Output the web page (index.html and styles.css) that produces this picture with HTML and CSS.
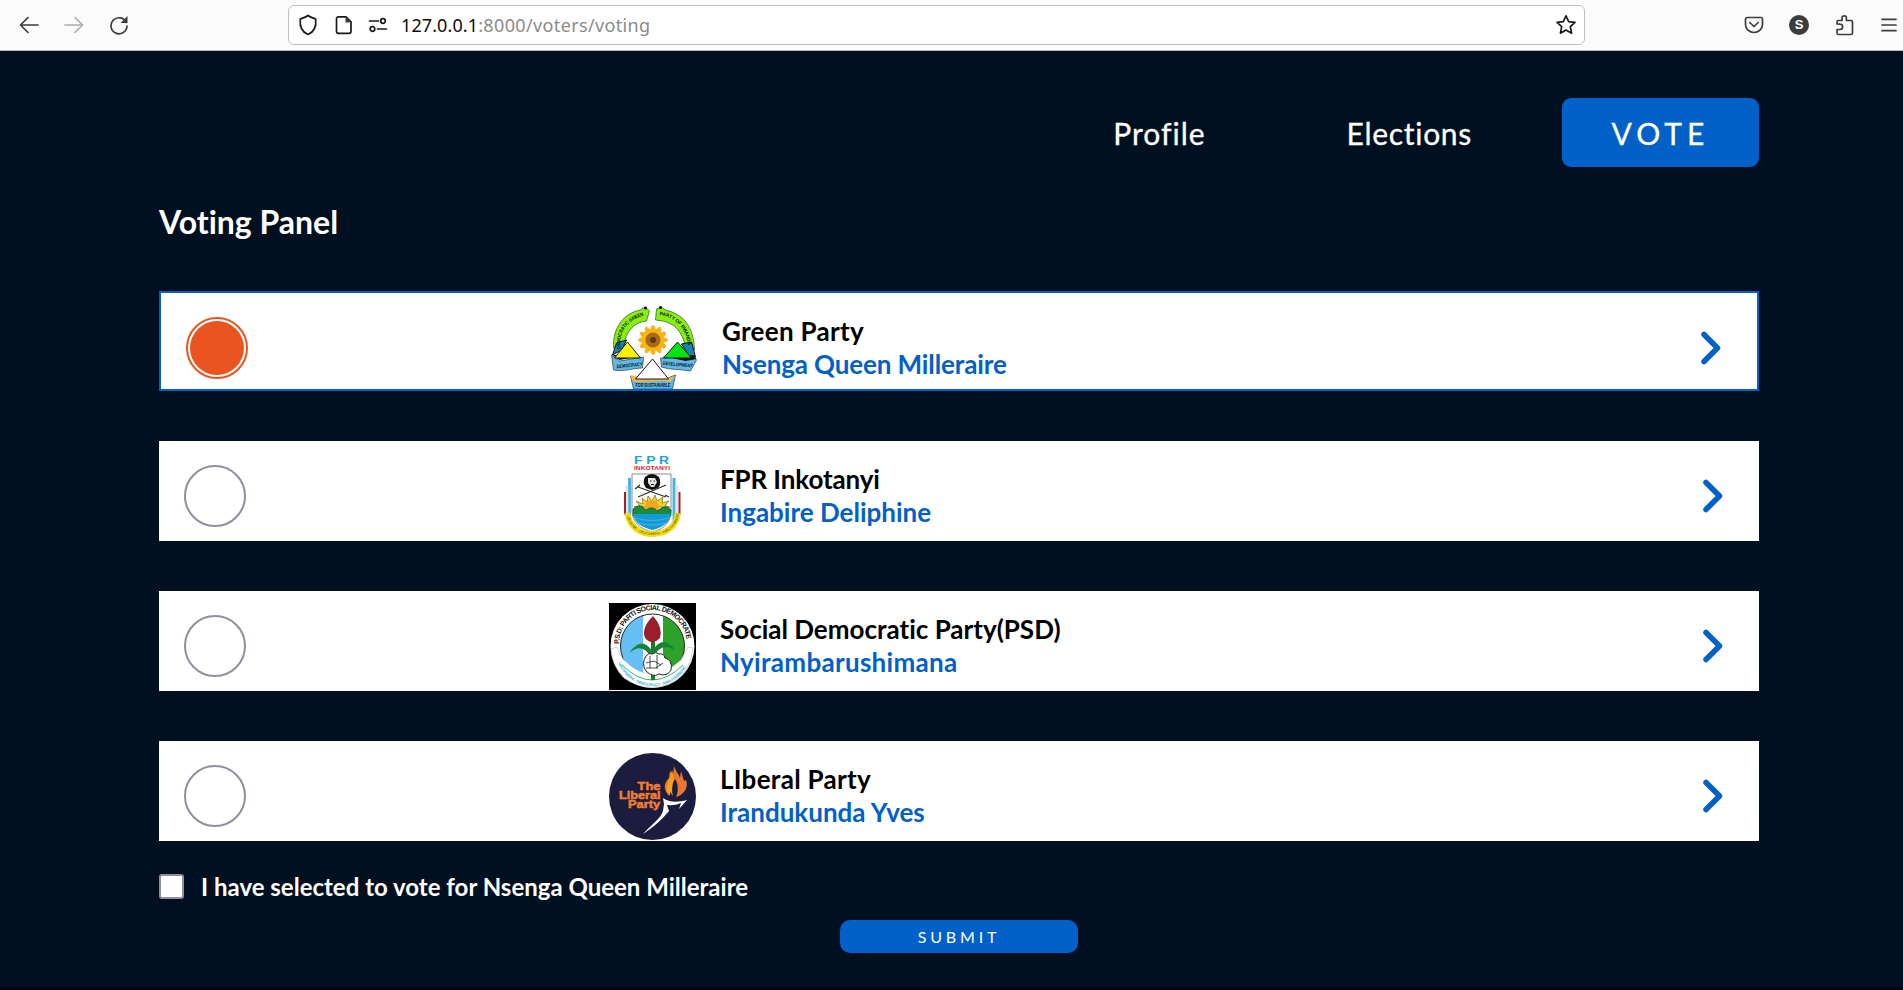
FILE: index.html
```html
<!DOCTYPE html>
<html lang="en">
<head>
<meta charset="utf-8">
<title>Voting Panel</title>
<link rel="stylesheet" href="styles.css">
</head>
<body>
<header class="browser">
  <div class="history">
    <svg width="20" height="20" viewBox="0 0 20 20"><path d="M19 10H2M9 2.500L1.500 10L9 17.500"/></svg>
    <svg class="off" width="20" height="20" viewBox="0 0 20 20"><path d="M1 10h17M11 2.500l7.500 7.500L11 17.500"/></svg>
    <svg width="20" height="20" viewBox="0 0 20 20"><path d="M17.300 7.500A8 8 0 1 0 18 11"/><path class="solid" d="M18.500 1v7h-7z"/></svg>
  </div>
  <div class="address">
    <svg class="shield" width="20" height="22" viewBox="0 0 20 22"><path d="M10 1.500C8 3.300 5 4 2.300 5C1.500 12 4 18 10 20.500C16 18 18.500 12 17.700 5C15 4 12 3.300 10 1.500z"/></svg>
    <svg class="page" width="18" height="20" viewBox="0 0 18 20"><path d="M3.500 1.800h7.500l5 5v9.500a2 2 0 0 1-2 2H3.500a2 2 0 0 1-2-2V3.800a2 2 0 0 1 2-2z"/><path class="solid" d="M10.500 1.500v6h6z"/></svg>
    <svg class="perms" width="20" height="16" viewBox="0 0 20 16"><path d="M1.500 4h9M9.500 12h9"/><circle cx="15" cy="4" r="2.300"/><circle cx="4.500" cy="12" r="2.300"/></svg>
    <span class="url"><b>127.0.0.1</b>:8000/voters/voting</span>
    <svg class="star" width="22" height="22" viewBox="0 0 22 22"><path d="M11 1.800l2.700 5.800 6.300.7-4.700 4.300 1.300 6.600L11 16l-5.600 3.200 1.300-6.600L2 8.300l6.300-.7z"/></svg>
  </div>
  <div class="tools">
    <svg width="20" height="20" viewBox="0 0 20 20"><path d="M3.200 2.500h13.600a1.700 1.700 0 0 1 1.700 1.700V9.500a8.500 8 0 0 1-17 0V4.200a1.700 1.700 0 0 1 1.700-1.700zM5.800 7.500L10 11.500l4.200-4"/></svg>
    <span class="account">S</span>
    <svg width="20" height="22" viewBox="0 0 20 22"><path d="M2 10V8a1.500 1.500 0 0 1 1.500-1.500h3.500V4a2.200 2.200 0 0 1 4.400 0v2.500h4.600A1.500 1.500 0 0 1 17.500 8v11a1.500 1.500 0 0 1-1.500 1.500H3.500A1.500 1.500 0 0 1 2 19v-3.500h3a2.500 2.500 0 0 0 0-5.300z"/></svg>
    <svg class="menu" width="16" height="16" viewBox="0 0 16 16"><path d="M1 2.300h14M1 8h14M1 13.700h14"/></svg>
  </div>
</header>
<main class="app">
  <nav class="nav">
    <a class="profile">Profile</a>
    <a class="elections">Elections</a>
    <a class="vote">VOTE</a>
  </nav>
  <h1 class="title">Voting Panel</h1>
  <form class="ballot">
    <label class="card selected">
      <span class="radio"></span>
      <svg class="logo" width="87" height="87" viewBox="1.500 -1 87 87">
        <defs>
          <path id="g1" d="M11 43C9 25 18 14 36 9"/>
          <path id="g2" d="M50 9C68 12 78 24 79 44"/>
        </defs>
        <g stroke="#183a18" stroke-width=".6" fill="#86f014">
          <path d="M36 1L40 5L37 15C25 16 16 25 14 41L4 42C3 22 14 7 31 4L33 2z"/>
          <path d="M47 3L52 1L56 4C73 8 84 19 85 44L76 41C73 26 65 17 53 15L46 14z"/>
        </g>
        <circle cx="36" cy="2" r="1.500"/><circle cx="51" cy="1.500" r="1.500"/>
        <g fill="#f8b415"><ellipse cx="43.500" cy="34" rx="15" ry="4"/><ellipse cx="43.500" cy="34" rx="15" ry="4" transform="rotate(30 43.500 34)"/><ellipse cx="43.500" cy="34" rx="15" ry="4" transform="rotate(60 43.500 34)"/><ellipse cx="43.500" cy="34" rx="15" ry="4" transform="rotate(90 43.500 34)"/><ellipse cx="43.500" cy="34" rx="15" ry="4" transform="rotate(120 43.500 34)"/><ellipse cx="43.500" cy="34" rx="15" ry="4" transform="rotate(150 43.500 34)"/></g>
        <circle cx="43.500" cy="34" r="7.500" fill="#a86a18"/><circle cx="43.500" cy="34" r="3" fill="#5a3810"/>
        <path d="M7 37L17 34L12 44L3 49zM72 38L82 36L86 51L80 50z" fill="#1785b8" stroke="#111"/>
        <path d="M2 49L10 55L34 51L33 62C24 62 14 66 4 64zM51 52L84 50L87 54L81 65C70 63 60 64 52 61z" fill="#5db9e8" stroke="#222" stroke-width=".6"/>
        <path d="M3 49L32 50L10 54zM53 50L84 49L87 53L76 55z" fill="#101410"/>
        <path d="M18 36L31 52H5z" fill="#fff200" stroke="#161616"/>
        <path d="M68 36L82 52H54z" fill="#00e511" stroke="#161616"/>
        <path d="M21 70L28 71L58 72L66 69L63 83H24z" fill="#5db9e8" stroke="#222" stroke-width=".6"/>
        <path d="M21 70C33 68 52 75 66 70L60 76C49 73 33 78 23 75z" fill="#f4b544"/>
        <path d="M43 53L59 73H26z" fill="#fff" stroke="#161616"/>
        <g font-family="Liberation Sans" font-weight="700" font-size="5" fill="#111">
          <text textLength="45" lengthAdjust="spacingAndGlyphs"><textPath href="#g1">DEMOCRATIC GREEN</textPath></text>
          <text textLength="45" lengthAdjust="spacingAndGlyphs"><textPath href="#g2">PARTY OF RWANDA</textPath></text>
          <text x="7" y="61" textLength="26" lengthAdjust="spacingAndGlyphs" transform="rotate(-6 20 60)" font-style="italic">DEMOCRACY</text>
          <text x="53" y="60" textLength="30" lengthAdjust="spacingAndGlyphs" transform="rotate(5 66 60)" font-style="italic">DEVELOPMENT</text>
          <text x="26" y="81" textLength="35" lengthAdjust="spacingAndGlyphs">FOR SUSTAINABLE</text>
        </g>
      </svg>
      <span class="who"><span class="party wide">Green Party</span><span class="name tight">Nsenga Queen Milleraire</span></span>
      <svg class="chev" width="20" height="34" viewBox="0 0 20 34"><path d="M3 3.500L16.500 17L3 30.500"/></svg>
    </label>
    <label class="card">
      <span class="radio"></span>
      <svg class="logo" width="87" height="87" viewBox="0 0 87 87">
        <g font-family="Liberation Sans" font-weight="700">
          <text x="25" y="10.500" font-size="10" fill="#1ea3dc" textLength="35" lengthAdjust="spacingAndGlyphs">F P R</text>
          <text x="25" y="17" font-size="5.500" fill="#e0242c" textLength="36" lengthAdjust="spacingAndGlyphs">INKOTANYI</text>
        </g>
        <path d="M20.500 25V68M65 25V68" stroke="#4bb5df" stroke-width="3"/>
        <path d="M18 32V64M68 32V64" stroke="#e4e4e4" stroke-width="2.500"/>
        <path d="M16 39V62M70.500 39V62" stroke="#a5202a" stroke-width="2"/>
        <path d="M23 21H62V57C62 72 52 77 43 79C32 76 23 70 23 57z" fill="#fff" stroke="#8a8a8a"/>
        <path d="M29 34L57 44M57 32L29 44M26 36l5-4M60 44l-4-2" stroke="#333" stroke-width="1.300"/>
        <path d="M36 24Q43 18 50 24Q53 31 49 35L43 37L37 35Q33 30 36 24z" fill="#111"/>
        <path d="M39 25h7l2 4-3 5h-3l-3-4z" fill="#e8e8e8"/><path d="M41 28h1.500M44.500 28H46M42 31.500h3" stroke="#111"/>
        <path d="M25 54l6-1-4-5 7 3-1-6 5 4 1-6 4 5 3-6 2 6 6-4-1 6 7-2-4 5 5 1z" fill="#f5d21c" stroke="#443b10" stroke-width=".5"/>
        <circle cx="43" cy="54" r="7" fill="#f0a81b"/>
        <path d="M24 60V56Q31 49 37 57Q44 52 48 58Q57 50 62 57V63H24z" fill="#168d3c" stroke="#222" stroke-width=".5"/>
        <path d="M24 61H62C60 71 52 75 43 77C32 74 26 70 24 61z" fill="#159bd4"/>
        <path d="M26 65q17 5 34 0M29 70q14 4 28 0" fill="none" stroke="#5cbfe4" stroke-width=".7"/>
        <path id="f1" d="M18 60C21 75 32 81 43 81C56 81 67 75 69 60" fill="none" stroke="#f4df13" stroke-width="6"/>
        <text font-family="Liberation Sans" font-size="3.500" fill="#4a4310" dy="1"><textPath href="#f1" startOffset="3">UBUMWE - UBUTABERA - AMAJYAMBERE</textPath></text>
      </svg>
      <span class="who"><span class="party tight">FPR Inkotanyi</span><span class="name">Ingabire Deliphine</span></span>
      <svg class="chev" width="20" height="34" viewBox="0 0 20 34"><path d="M3 3.500L16.500 17L3 30.500"/></svg>
    </label>
    <label class="card">
      <span class="radio"></span>
      <svg class="logo" width="87" height="87" viewBox="0 0 87 87">
        <defs><clipPath id="disc"><circle cx="43.500" cy="43" r="32"/></clipPath>
          <path id="p1" d="M10 41A34 34 0 0 1 78 41"/><path id="p2" d="M9 60A38 38 0 0 0 79 60"/></defs>
        <path d="M0 0h87v87H0z"/>
        <circle cx="43.500" cy="43" r="42" fill="#fff"/>
        <g clip-path="url(#disc)"><path d="M10 0h24v87H10z" fill="#66c0f5"/><path d="M34 0h20v87H34z" fill="#fff"/><path d="M54 0h30v87H54z" fill="#2ea32b"/></g>
        <circle cx="43.500" cy="43" r="32" fill="none" stroke="#222" stroke-width="1"/>
        <path d="M2 46L8 44Q10 53 16 58Q42 84 72 57L79 44L84 45Q82 64 70 75Q43 94 15 75Q3 63 2 46z" fill="#fff" stroke="#bbb" stroke-width=".6"/>
        <path d="M13 62Q43 92 74 62" fill="none" stroke="#42ad62"/>
        <path d="M44 36V77" stroke="#1b792a" stroke-width="4"/>
        <path d="M43 48Q33 32 20 50Q34 38 43 56Q52 38 66 47Q54 31 44 47z" fill="#188235"/>
        <path d="M44 13Q32 25 36 35Q43 43 51 35Q54 24 44 13z" fill="#981f2b"/>
        <path d="M37 53q3-4 6-2q4-3 7 0q5-1 6 4q8 2 6 12q-4 7-12 4q-6 4-13-3q-5-7 0-15z" fill="#fff" stroke="#222"/>
        <path d="M37 60l8-2 7 4M37 65l10 0 7-5M41 53v12M48 52v14" fill="none" stroke="#222" stroke-width=".8"/>
        <text font-family="Liberation Sans" font-size="7" font-weight="700" textLength="102" fill="#111"><textPath href="#p1">P.S.D: PARTI SOCIAL DEMOCRATE</textPath></text>
        <text font-family="Liberation Sans" font-size="4" font-weight="700" fill="#3ab6dc" textLength="84"><textPath href="#p2">UBUTABERA - DEMOCRACY - AMAJYAMBERE</textPath></text>
      </svg>
      <span class="who"><span class="party">Social Democratic Party(PSD)</span><span class="name wide">Nyirambarushimana</span></span>
      <svg class="chev" width="20" height="34" viewBox="0 0 20 34"><path d="M3 3.500L16.500 17L3 30.500"/></svg>
    </label>
    <label class="card">
      <span class="radio"></span>
      <svg class="logo" width="87" height="87" viewBox="0 0 87 87">
        <circle cx="43.500" cy="43.500" r="43.500" fill="#1c1d3e"/>
        <g font-family="Liberation Sans" font-weight="700" font-size="10.500" fill="#f27d33" stroke="#f27d33" stroke-width=".5">
          <text x="28.500" y="37" textLength="23" lengthAdjust="spacingAndGlyphs">The</text><text x="10" y="46" textLength="41.500" lengthAdjust="spacingAndGlyphs">Liberal</text><text x="19" y="55" textLength="32" lengthAdjust="spacingAndGlyphs">Party</text>
        </g>
        <path d="M60 43C53 35 56 29 60 25L61 18L64 22L65 13C67 19 70 21 71 25L72 18L75 28L77 27C80 34 75 42 67 44C70 38 69 30 66 26C64 31 59 34 60 43z" fill="#e87730"/>
        <path d="M61 43C54 34 60 30 63 17C67 29 61 33 64 43L61 39z" fill="#f3a01c"/>
        <path d="M54 45C61 50 69 49 78 47L70 56L72 50C66 53 60 52 58 52L60 58C52 68 43 75 34 81C43 71 52 65 54 58L55 51z" fill="#fff"/>
      </svg>
      <span class="who"><span class="party wide">LIberal Party</span><span class="name">Irandukunda Yves</span></span>
      <svg class="chev" width="20" height="34" viewBox="0 0 20 34"><path d="M3 3.500L16.500 17L3 30.500"/></svg>
    </label>
    <label class="confirm"><span class="check"></span><span>I have selected to vote for Nsenga Queen Milleraire</span></label>
    <button class="submit" type="button">SUBMIT</button>
  </form>
</main>
</body>
</html>
```
FILE: styles.css
```css
* { box-sizing: border-box; }
body { margin: 0; height: 990px; overflow: hidden; background: #001021; font-family: Lato, "Liberation Sans", sans-serif; font-variant-ligatures: none; }
svg { display: block; flex: none; }

.browser { display: flex; align-items: center; height: 51px; background: #fbfbfb; border-bottom: 1px solid #b9b9bb; }
.browser path, .browser circle { fill: none; stroke: #3d3d40; stroke-width: 1.700; stroke-linecap: round; stroke-linejoin: round; }
.browser .solid { fill: #3d3d40; stroke: none; }
.history { display: flex; gap: 25px; padding-left: 19px; width: 288px; }
.history .off { opacity: .4; }
.address { display: flex; align-items: center; width: 1297px; height: 40px; background: #fff; border: 1px solid #bfbfc2; border-radius: 6px; padding: 0 7px 0 9px; }
.address path, .address circle { stroke: #1b1b1f; }
.page { margin-left: 17px; }
.perms { margin-left: 15px; }
.url { margin-left: 13px; font: 18px "Noto Sans", sans-serif; letter-spacing: .36px; color: #8b8b8d; white-space: nowrap; }
.url b { font-weight: 400; letter-spacing: .1px; color: #0c0c10; }
.star { margin-left: auto; }
.tools { display: flex; align-items: center; padding-left: 159px; }
.account { width: 20px; height: 20px; margin: 0 26px 0 25px; border-radius: 50%; background: #3d3d3f; color: #fff; font: 700 13px/20px "Liberation Sans", sans-serif; text-align: center; }
.menu { margin-left: 26px; }

.app { height: 939px; padding: 47px 144px 0 159px; border-bottom: 3px solid #00040b; }
.nav { display: flex; justify-content: flex-end; height: 69px; line-height: 70px; font-size: 30px; color: #fff; -webkit-text-stroke: .3px #fff; }
.profile { margin-right: 141px; letter-spacing: 1px; }
.elections { margin-right: 90px; letter-spacing: .7px; }
.vote { width: 197px; border-radius: 9px; background: #0260c9; text-align: center; letter-spacing: 5px; }
.title { margin: 35px 0 0; height: 40px; font-size: 32px; line-height: 40px; font-weight: 700; color: #fff; }
.ballot { display: flex; flex-direction: column; gap: 50px; margin-top: 49px; }
.card { display: flex; height: 100px; padding: 0 36px 0 25px; background: #fff; overflow: hidden; }
.card.selected { border: 2px solid #0260c9; }
.radio { flex: none; width: 62px; height: 62px; margin-top: 24px; border: 2px solid #8f8f9d; border-radius: 50%; }
.selected .radio { border-color: #e95420; background: #e95420; background-clip: content-box; padding: 2px; }
.logo { margin: 12px 24px 0 363px; }
.who { display: flex; flex-direction: column; padding-top: 22px; font-size: 26px; line-height: 33px; font-weight: 700; white-space: nowrap; }
.party { color: #000; }
.name { color: #0260c9; }
.wide { letter-spacing: .3px; }
.tight { letter-spacing: -.12px; }
.chev { margin: 38px 0 0 auto; }
.chev path { fill: none; stroke: #0260c9; stroke-width: 5.500; stroke-linecap: round; stroke-linejoin: round; }
.confirm { display: flex; align-items: center; height: 30px; margin-top: -20px; color: #fff; font-size: 24px; font-weight: 700; white-space: nowrap; }
.check { width: 25px; height: 25px; margin-right: 17px; background: #fff; border: 2px solid #8f8f9d; border-radius: 3px; }
.submit { width: 238px; height: 33px; margin: -31px auto 0; padding: 0; border: 0; border-radius: 10px; background: #0260c9; color: #fff; font: 16px/33px Lato, sans-serif; letter-spacing: 3.800px; }
```
